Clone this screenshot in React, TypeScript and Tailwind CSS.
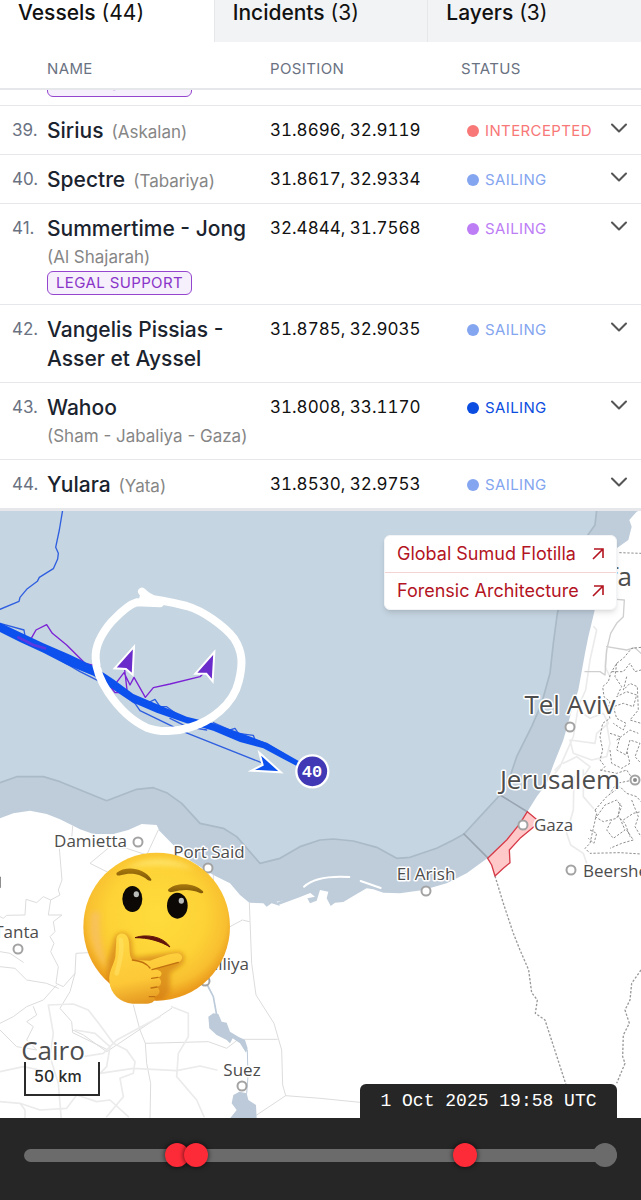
import { useState } from 'react';
import { ChevronDown } from 'lucide-react';

interface Vessel {
  id: number;
  name: string;
  alias?: string;
  stacked?: boolean;
  legal?: boolean;
  position: string;
  status: 'SAILING' | 'INTERCEPTED';
  tone: string;
}

const vessels: Vessel[] = [
  { id: 39, name: 'Sirius', alias: 'Askalan', position: '31.8696, 32.9119', status: 'INTERCEPTED', tone: 'text-[#f87878]' },
  { id: 40, name: 'Spectre', alias: 'Tabariya', position: '31.8617, 32.9334', status: 'SAILING', tone: 'text-[#84a5ef]' },
  { id: 41, name: 'Summertime - Jong', alias: 'Al Shajarah', stacked: true, legal: true, position: '32.4844, 31.7568', status: 'SAILING', tone: 'text-[#bd7df5]' },
  { id: 42, name: 'Vangelis Pissias - Asser et Ayssel', position: '31.8785, 32.9035', status: 'SAILING', tone: 'text-[#84a5ef]' },
  { id: 43, name: 'Wahoo', alias: 'Sham - Jabaliya - Gaza', stacked: true, position: '31.8008, 33.1170', status: 'SAILING', tone: 'text-[#0b4de0]' },
  { id: 44, name: 'Yulara', alias: 'Yata', position: '31.8530, 32.9753', status: 'SAILING', tone: 'text-[#84a5ef]' },
];

const tabs = [
  { label: 'Vessels', count: 44 },
  { label: 'Incidents', count: 3 },
  { label: 'Layers', count: 3 },
];

const links = [
  { label: 'Global Sumud Flotilla', href: '#flotilla' },
  { label: 'Forensic Architecture', href: '#architecture' },
];

// position of each incident along the timeline, in percent
const incidents = [25.8, 29, 74.4];

const places = [
  { name: 'Haifa', x: 632, y: 75, size: 26, anchor: 'end' },
  { name: 'Tel Aviv', x: 570, y: 203, size: 26, anchor: 'middle' },
  { name: 'Jerusalem', x: 560, y: 278, size: 26, anchor: 'middle' },
  { name: 'Cairo', x: 53, y: 549, size: 26, anchor: 'middle' },
  { name: 'Gaza', x: 534, y: 320, size: 17, anchor: 'start' },
  { name: 'Beersheba', x: 583, y: 366, size: 17, anchor: 'start' },
  { name: 'El Arish', x: 426, y: 369, size: 17, anchor: 'middle' },
  { name: 'Damietta', x: 127, y: 336, size: 17, anchor: 'end' },
  { name: 'Port Said', x: 209, y: 347, size: 17, anchor: 'middle' },
  { name: 'Ismailiya', x: 249, y: 459, size: 17, anchor: 'end' },
  { name: 'Tanta', x: 39, y: 427, size: 17, anchor: 'end' },
  { name: 'Suez', x: 242, y: 565, size: 17, anchor: 'middle' },
] as const;

const pins = [
  [138, 331], [208, 357], [18, 438], [205, 470], [242, 575],
  [426, 380], [523, 314], [571, 359], [570, 216], [635, 269],
];

function LegalTag() {
  return (
    <span className="flex h-6 w-[145px] shrink-0 items-center justify-center rounded-md border border-[#9546cf] bg-[#f6effc] text-[15px] leading-5 tracking-wide text-[#8a35c9]">
      LEGAL SUPPORT
    </span>
  );
}

function VesselRow({ vessel }: { vessel: Vessel }) {
  return (
    <tr className="border-b border-gray-200 align-top leading-[29px]">
      <td className="pt-2.5 pb-[9px] pl-3 text-[17px] text-gray-500">{vessel.id}.</td>
      <td className="pt-2.5 pb-[9px] text-[21px]">
        <span className="font-medium text-[#1a232e]">{vessel.name}</span>
        {vessel.alias && (
          <span className={vessel.stacked ? 'block text-[17px] leading-7 text-[#868686]' : 'ml-2 text-[17px] leading-none text-[#868686]'}>
            ({vessel.alias})
          </span>
        )}
        {vessel.legal && <LegalTag />}
      </td>
      <td className="pt-2.5 pb-[9px] text-[17px] whitespace-nowrap text-[#111] tabular-nums">{vessel.position}</td>
      <td className={`pt-2.5 pb-[9px] pl-1.5 ${vessel.tone}`}>
        <div className="flex items-center gap-1.5 text-[15px] tracking-wide">
          <span className="size-3 rounded-full bg-current" />
          {vessel.status}
        </div>
      </td>
      <td className="pt-2.5 pr-2">
        <button type="button" aria-label={`Show ${vessel.name}`} className="ml-auto flex h-6 items-center text-[#555]">
          <ChevronDown size={28} strokeWidth={1.75} />
        </button>
      </td>
    </tr>
  );
}

function Emoji() {
  return (
    <g transform="translate(210 990)">
      <defs>
        <radialGradient id="face" cx="0.5" cy="0.42" r="0.56">
          <stop offset="0" stopColor="#ffdc3c" />
          <stop offset="0.6" stopColor="#fdd236" />
          <stop offset="0.85" stopColor="#f8bf30" />
          <stop offset="1" stopColor="#eb9b1c" />
        </radialGradient>
        <linearGradient id="hand" x1="0.3" y1="0" x2="0.5" y2="1">
          <stop offset="0" stopColor="#ffd844" />
          <stop offset="0.65" stopColor="#fdc838" />
          <stop offset="1" stopColor="#e39620" />
        </linearGradient>
        <linearGradient id="brow" x1="0" y1="0" x2="0" y2="1">
          <stop offset="0" stopColor="#a9790e" />
          <stop offset="1" stopColor="#7e5707" />
        </linearGradient>
        <filter id="soft" x="-30%" y="-30%" width="160%" height="160%">
          <feGaussianBlur stdDeviation="8" />
        </filter>
        <clipPath id="head">
          <ellipse cx="260" cy="260" rx="220" ry="222" />
        </clipPath>
      </defs>
      <ellipse cx="260" cy="260" rx="220" ry="222" fill="url(#face)" />
      <path d="M165 85 C225 48 320 50 370 88 C310 72 225 72 165 85Z" fill="#ffec80" opacity="0.7" filter="url(#soft)" />
      <path d="M65 215 C52 290 75 345 112 385 C94 330 84 270 90 215Z" fill="#f8c074" opacity="0.6" filter="url(#soft)" />
      <path d="M140 98 C165 77 222 81 244 118 C245 124 238 123 233 120 C205 98 178 99 151 106 C142 108 137 104 140 98Z" fill="url(#brow)" />
      <path d="M295 148 C315 127 374 126 399 154 C402 160 396 161 390 159 C357 145 335 150 307 156 C297 158 292 153 295 148Z" fill="url(#brow)" />
      <ellipse cx="187" cy="177" rx="30" ry="39" fill="#0b0806" />
      <ellipse cx="322" cy="197" rx="31" ry="39" fill="#0b0806" />
      <ellipse cx="199" cy="163" rx="8" ry="9" fill="#b9bbb9" />
      <ellipse cx="334" cy="182" rx="8" ry="9" fill="#b9bbb9" />
      <path d="M195 293 C228 281 280 289 300 321 C270 303 235 293 195 293Z" fill="#61120a" stroke="#61120a" strokeWidth="3" />
      {/* shadow the hand throws on the chin */}
      <g clipPath="url(#head)" filter="url(#soft)">
        <path d="M134 290 C150 270 176 276 184 300 C188 320 184 345 198 352 L320 336 C344 334 350 356 336 374 L300 400 L300 455 L275 485 L205 480 L110 450 L112 370Z" fill="#d07a12" opacity="0.65" />
      </g>
      <path
        d="M139 300 C138 277 166 274 174 294 C182 314 174 344 187 360 L240 362 C270 353 308 336 328 341 C341 347 338 361 325 367 L252 388 C281 390 279 409 264 412 C280 421 274 438 261 441 C275 452 268 466 254 470 C256 488 242 491 225 491 L188 491 C150 488 122 462 118 425 C115 392 132 375 136 350Z"
        fill="url(#hand)"
      />
      <path d="M187 360 C210 362 228 368 240 384 M325 367 L246 389 M264 412 L245 415 M261 441 L243 444 M254 470 L238 470" fill="none" stroke="#c0700f" strokeWidth="4" strokeLinecap="round" />
      <path d="M152 300 C158 325 150 365 140 400" fill="none" stroke="#ffe66c" strokeWidth="14" strokeLinecap="round" opacity="0.5" />
    </g>
  );
}

function MapCanvas() {
  return (
    <svg viewBox="0 0 641 607" preserveAspectRatio="xMidYMid slice" className="absolute inset-0 size-full bg-[#c5d5e1]" role="img" aria-label="Vessel map">
      <g transform="translate(0 -1) scale(0.33333)" fill="none" strokeLinejoin="round" strokeLinecap="round">
        {/* territorial waters */}
        <path
          d="M0 818 L50 800 L130 800 L180 815 L320 872 L410 838 L460 833 L500 848 L545 880 L600 940 L670 955 L710 980 L780 1060 L840 1045 L900 1010 L960 990 L1000 987 L1060 993 L1130 1012 L1190 1045 L1230 1042 L1310 1015 L1360 990 L1392 972 L1440 920 L1500 855 L1530 800 L1550 740 L1595 650 L1625 580 L1650 490 L1660 400 L1672 310 L1700 200 L1760 80 L1785 45 L1790 0 L1923 0 L1923 1300 L0 1300Z"
          fill="#bfcddb"
        />
        <path
          d="M0 818 L50 800 L130 800 L180 815 L320 872 L410 838 L460 833 L500 848 L545 880 L600 940 L670 955 L710 980 L780 1060 L840 1045 L900 1010 L960 990 L1000 987 L1060 993 L1130 1012 L1190 1045 L1230 1042 L1310 1015 L1360 990 L1392 972 L1440 920 L1500 855 L1530 800 L1550 740 L1595 650 L1625 580 L1650 490 L1660 400 L1672 310 L1700 200 L1760 80 L1785 45 L1790 0"
          stroke="#aabac6"
          strokeWidth="5"
        />
        {/* land */}
        <path
          d="M0 925 L40 910 L90 902 L140 912 L180 928 L240 958 L280 972 L340 972 L385 960 L425 942 L470 945 L478 962 L520 1005 L560 1045 L640 1095 L690 1120 L720 1155 L748 1178 L790 1180 L800 1190 L815 1180 L840 1188 L830 1175 L870 1168 L890 1160 L930 1148 L945 1160 L922 1165 L930 1180 L950 1172 L960 1140 L985 1145 L980 1165 L992 1188 L1005 1178 L1030 1176 L1060 1158 L1100 1135 L1120 1138 L1150 1148 L1200 1150 L1270 1140 L1340 1120 L1400 1090 L1462 1045 L1510 1000 L1550 950 L1582 905 L1610 860 L1640 820 L1660 765 L1690 690 L1710 620 L1735 540 L1755 430 L1765 380 L1782 310 L1805 200 L1850 115 L1885 90 L1895 50 L1888 30 L1910 5 L1923 0 L1923 1830 L0 1830Z"
          fill="#fff"
        />
        <path d="M912 1130 Q950 1095 1048 1101 M1082 1113 L1142 1134" stroke="#fff" strokeWidth="6" />
        <path d="M836 1180 L895 1158 L940 1140 L962 1120" stroke="#bfcddb" strokeWidth="9" />

        {/* district borders and roads */}
        <g stroke="#dcdcdc" strokeWidth="3">
          <path d="M218 948 L215 985 L178 1015 L186 1110 L175 1140 L180 1155 L152 1170 L130 1160 L110 1178 L78 1168 L75 1215 L20 1216 L10 1225 L0 1220 M152 1170 L145 1215 L186 1215 L160 1235 L165 1265 L150 1280 L162 1300 L152 1325 L175 1370 L168 1420 L190 1430 L225 1390 L210 1445 L180 1495 L215 1535 L218 1568 L320 1618" />
          <path d="M475 960 L440 1035 L380 1015 L330 1010 L270 1060 L330 1090 M640 1095 L640 1130 L620 1160 M748 1178 L755 1360 L768 1455 L822 1540 L845 1620 L848 1725 L857 1757 L960 1765 L1080 1777 M857 1757 L770 1815 M690 1250 L727 1230 L748 1235" />
          <path d="M400 1485 L420 1560 L436 1600 L440 1660 L452 1720 L450 1830 M436 1600 L625 1595 L680 1615 L715 1588 L832 1588 M218 1560 L250 1575 L320 1625 L420 1558 L515 1495" />
          <path d="M0 1540 L40 1520 L80 1490 L130 1470 L170 1425 M100 1490 L110 1515 L80 1535 L100 1550 L80 1590 L110 1620 L50 1610 L0 1560 M0 1370 L45 1375 L80 1410 L140 1420 L175 1435 M0 1325 L30 1330 L70 1357 M225 1390 L228 1330 L265 1328" />
        </g>
        <g stroke="#ebebeb" strokeWidth="5">
          <path d="M145 1485 L160 1570 L150 1640 L175 1720 L184 1830 M145 1485 L220 1482 L265 1500 L300 1545 L340 1600 L380 1620 L405 1655 L400 1690 L360 1705 L370 1760 L320 1820 M225 1560 L285 1570 L330 1610 L320 1670 L300 1690 L400 1675 L530 1682 L600 1668 L650 1680" />
          <path d="M515 1490 L565 1510 L565 1580 L535 1630 L530 1700 L590 1770 L612 1820 M0 1775 L60 1780 L120 1800 L200 1795 L230 1755 L290 1775 L330 1770 L385 1820 M75 1830 L75 1800 L60 1780 M0 1685 L70 1670 L120 1680" />
          <path d="M250 1640 L310 1630 L350 1590 L480 1520" />
          <path d="M1782 350 L1790 360 L1770 450 L1757 540 L1735 590 L1720 680 L1680 770 L1665 790 M1820 420 L1815 470 L1830 500 M1735 600 L1770 625 L1810 610 L1825 640 L1790 670 L1785 700 L1710 690 L1720 730 L1775 750 L1820 740 L1830 700 L1820 640 M1690 760 L1730 740 L1770 770 L1750 800" />
          <path d="M1750 780 L1750 860 L1780 895 M1680 765 L1665 780 M1722 800 L1720 900 L1700 970 L1712 1005 L1750 1030 L1760 1060" />
        </g>
        <path d="M1755 485 L1800 485 L1815 495 L1820 420 L1832 370 L1850 340 L1870 320 L1873 270 L1850 268 M1820 410 L1880 420 L1905 413 L1923 430" stroke="#cfcfcf" strokeWidth="4" />

        {/* armistice lines */}
        <g stroke="#8e8e8e" strokeWidth="3" strokeDasharray="7 5" strokeLinecap="butt">
          <path d="M1858 128 L1923 130 M1923 412 L1895 415 L1870 445 L1850 460 L1832 490 L1825 515 L1808 530 L1812 560 L1830 575 L1822 600 L1830 625 L1808 640 L1800 680 L1808 720 L1800 750 L1815 770 L1800 785" />
          <path d="M1836 485 L1870 485 L1890 460 L1905 485 L1923 480 M1850 460 L1845 500 L1865 530 L1850 560 L1880 545 L1910 555 L1900 590 L1870 580 L1840 590 L1850 625 L1878 640 L1870 660 L1840 640 M1880 500 L1870 540 L1890 520 L1912 530 L1915 600 L1890 630 L1923 640" />
          <path d="M1830 670 L1860 680 L1850 720 L1878 735 L1890 690 L1920 700 L1905 740 L1923 760 M1830 720 L1835 760 L1865 775 L1890 760 L1880 720 M1850 690 L1890 660 L1915 670 M1800 780 L1850 790 L1880 780 L1900 810 L1850 820 L1830 850" />
          <path d="M1785 900 L1790 910 L1770 1000 L1755 1015 L1770 1030 L1860 1028 L1923 1032 M1785 900 L1820 860 L1860 830 L1880 850 L1910 860 L1923 875 M1785 920 L1810 935 L1850 925 L1865 890 L1850 870 L1815 885 L1790 920 M1770 960 L1790 970 L1782 1000 L1765 985" />
          <path d="M1860 925 L1875 960 L1840 985 L1820 960 L1835 930 M1870 930 L1900 910 L1923 905 M1880 960 L1900 990 L1865 1000 L1830 1015 M1860 880 L1855 920 L1875 940 L1890 980 M1895 870 L1915 920 L1905 950 L1923 980" />
        </g>
        <g stroke="#9a9a9a" strokeWidth="4" strokeDasharray="7 5" strokeLinecap="butt">
          <path d="M1485 1098 L1510 1180 L1540 1270 L1560 1320 L1586 1380 L1595 1448 L1612 1470 L1606 1510 L1635 1530 L1700 1730" />
          <path d="M1923 1380 L1895 1420 L1890 1470 L1875 1500 L1888 1540 L1870 1575 L1868 1640 L1875 1660 L1850 1720" />
        </g>

        {/* inland water */}
        <g fill="#bccad9">
          <path d="M625 1520 L640 1510 L655 1512 L665 1535 L680 1538 L690 1565 L715 1580 L735 1590 L743 1615 L738 1628 L720 1600 L698 1585 L690 1600 L680 1590 L650 1575 L628 1555Z" />
          <path d="M700 1755 L718 1745 L740 1750 L745 1770 L768 1785 L770 1825 L690 1825 L710 1800 L695 1780Z" />
        </g>
        <path d="M622 1425 L640 1460 L650 1515" stroke="#bccad9" strokeWidth="5" />
        <path d="M742 1620 L744 1700 L740 1750" stroke="#bccad9" strokeWidth="3" />

        {/* Gaza */}
        <path d="M1392 972 L1465 1045 M1500 855 L1582 905" stroke="#99a5b0" strokeWidth="5" />
        <path d="M1582 905 L1612 930 L1608 945 L1590 960 L1560 985 L1528 1020 L1530 1058 L1510 1075 L1485 1098 L1475 1065 L1463 1045 L1520 990 L1560 940Z" fill="#ffc9c9" stroke="#d63a48" strokeWidth="4" />

        {/* fleet tracks */}
        <g stroke="#2f5fe0" strokeWidth="4">
          <path d="M188 0 L178 60 L167 112 L175 130 L173 147 L160 176 L118 202 L112 214 L80 238 L60 262 L57 274 L0 298" />
          <path d="M180 450 L240 485 L300 515 L345 540 L405 580 L420 602 L550 665 L790 760 M430 585 L465 568 L480 590 L500 590 L530 612 M0 340 L72 360 L75 378 M640 638 L690 660 L705 655 L715 670 L760 676 L765 690 L800 700 L850 730 M510 625 L560 650 L620 660" />
        </g>
        <g stroke="#7c22d6" strokeWidth="4">
          <path d="M50 378 L75 398 L95 383 L108 360 L140 344 L157 370 L200 405 L255 460 L300 470 M340 530 L372 488 L390 525 L402 502 L436 562 L460 533 L510 522 L600 500 L612 488 M382 548 L374 480 M335 535 L345 548 L382 548" />
        </g>
        <path
          d="M0 338 L60 367 L130 400 L210 434 L280 468 L340 508 L400 552 L470 582 L560 620 L640 640 L720 668 L800 699 L850 727 L900 755 L900 773 L850 747 L790 715 L720 696 L640 662 L560 640 L470 608 L400 578 L340 538 L280 497 L200 464 L130 428 L60 396 L0 366Z"
          fill="#0c50ee"
        />
        <path d="M55 382 L100 405 L135 415" stroke="#5b39e2" strokeWidth="8" />

        {/* highlighted area */}
        <path
          d="M426 245 C440 262 470 272 480 280 L410 277 C380 285 350 320 335 335 C305 370 285 410 287 445 C288 480 300 510 325 548 C350 585 390 630 440 653 C480 668 530 665 570 652 C630 635 700 585 716 515 C730 460 728 425 702 385 C675 350 610 302 560 288 C520 278 480 268 430 264"
          stroke="#fff"
          strokeWidth="24"
        />

        <g stroke="#fff" strokeWidth="6" strokeLinejoin="miter">
          <path d="M402 410 L344 475 L378 477 L398 494Z" fill="#6a2ccb" />
          <path d="M643 426 L586 491 L619 491 L638 514Z" fill="#6a2ccb" />
          <path d="M778 728 L843 787 L754 782 L788 765Z" fill="#0c50ee" />
        </g>
        <circle cx="937" cy="784" r="48" fill="#4038b4" stroke="#fff" strokeWidth="7" />
        <path d="M0 1102 V1132" stroke="#777" strokeWidth="5" />
      </g>

      <text x="312" y="266" textAnchor="middle" className="fill-white font-['Liberation_Mono'] text-[17px] font-bold">40</text>
      {pins.map(([x, y]) => (
        <circle key={`${x}-${y}`} cx={x} cy={y} r="4.5" fill="#fff" stroke="#a3a3a3" strokeWidth="2" />
      ))}
      <circle cx="635" cy="269" r="2" fill="#888" />
      {places.map((place) => (
        <text
          key={place.name}
          x={place.x}
          y={place.y}
          fontSize={place.size}
          textAnchor={place.anchor}
          stroke="#fff"
          strokeWidth="3"
          strokeLinejoin="round"
          className="fill-[#4d4d4d] font-['Open_Sans',sans-serif] [paint-order:stroke]"
        >
          {place.name}
        </text>
      ))}
      <g transform="translate(0 -1) scale(0.33333)">
        <Emoji />
      </g>
    </svg>
  );
}

export default function App() {
  const [active, setActive] = useState('Vessels');
  const [time, setTime] = useState(100);

  return (
    <div className="flex min-h-screen flex-col bg-white font-['Inter',sans-serif]">
      <nav className="grid grid-cols-3">
        {tabs.map((tab) => (
          <button
            key={tab.label}
            type="button"
            onClick={() => setActive(tab.label)}
            className={`pb-4 pl-[18px] text-left text-[21px] leading-[26px] text-[#111] ${
              tab.label === active ? 'bg-white' : 'border-l border-gray-200 bg-[#f2f3f5]'
            }`}
          >
            <span className="font-medium">{tab.label}</span> ({tab.count})
          </button>
        ))}
      </nav>

      <table className="w-full table-fixed border-collapse">
        <colgroup>
          <col className="w-[47px]" />
          <col />
          <col className="w-[191px]" />
          <col className="w-[140px]" />
          <col className="w-10" />
        </colgroup>
        <thead>
          <tr className="h-[47px] border-b-2 border-gray-200 text-left text-[15px] leading-5 tracking-wide text-gray-500">
            <th aria-label="Number" />
            <th className="pt-2 font-normal">NAME</th>
            <th className="pt-2 font-normal">POSITION</th>
            <th className="pt-2 font-normal">STATUS</th>
            <th aria-label="Details" />
          </tr>
        </thead>
        <tbody>
          <tr className="border-b border-gray-200">
            <td />
            <td colSpan={4} className="pb-2">
              <div className="flex h-[7px] items-end overflow-hidden">
                <LegalTag />
              </div>
            </td>
          </tr>
          {vessels.map((vessel) => (
            <VesselRow key={vessel.id} vessel={vessel} />
          ))}
        </tbody>
      </table>

      <section className="relative min-h-96 flex-1 overflow-hidden border-t-2 border-gray-200">
        <MapCanvas />

        <div className="absolute top-6 right-6 w-[233px] rounded-md border border-gray-100 bg-white shadow-md">
          {links.map((link) => (
            <a
              key={link.label}
              href={link.href}
              className="flex items-center justify-between border-b border-[#f3d3d3] px-3 pt-1 pb-1 text-[18px] leading-7 text-[#b3141f] last:border-b-0"
            >
              {link.label}
              <svg width="12" height="12" viewBox="0 0 12 12" fill="none" stroke="currentColor" strokeWidth="1.6">
                <path d="M1 11 L11 1 M2 1 H11 V10" />
              </svg>
            </a>
          ))}
        </div>

        <div className="absolute bottom-[22px] left-6 h-[34px] w-[76px] border-2 border-t-0 border-[#2b2b2b] pl-2 text-base leading-7 font-medium text-[#2b2b2b]">
          50 km
        </div>

        <label
          htmlFor="timeline"
          className="absolute right-6 bottom-0 w-[257px] rounded-t-md bg-[#262626] text-center font-['Liberation_Mono',monospace] text-[18px] leading-[34px] text-white"
        >
          1 Oct 2025 19:58 UTC
        </label>
      </section>

      <footer className="bg-[#262626] px-6 pt-[25px] pb-[33px]">
        <div className="relative flex h-6 items-center">
          <input
            id="timeline"
            type="range"
            min={0}
            max={100}
            value={time}
            onChange={(event) => setTime(Number(event.target.value))}
            className="h-[13px] w-full appearance-none rounded-full bg-[#6b6b6b] [&::-webkit-slider-thumb]:size-6 [&::-webkit-slider-thumb]:appearance-none [&::-webkit-slider-thumb]:rounded-full [&::-webkit-slider-thumb]:bg-[#6b6b6b]"
          />
          {incidents.map((left) => (
            <button
              key={left}
              type="button"
              aria-label="Incident"
              className="absolute top-0 size-6 -translate-x-1/2 rounded-full bg-[#fd2b38] shadow-[0_0_4px_1px_rgba(0,0,0,0.5)]"
              style={{ left: `${left}%` }}
            />
          ))}
        </div>
      </footer>
    </div>
  );
}
